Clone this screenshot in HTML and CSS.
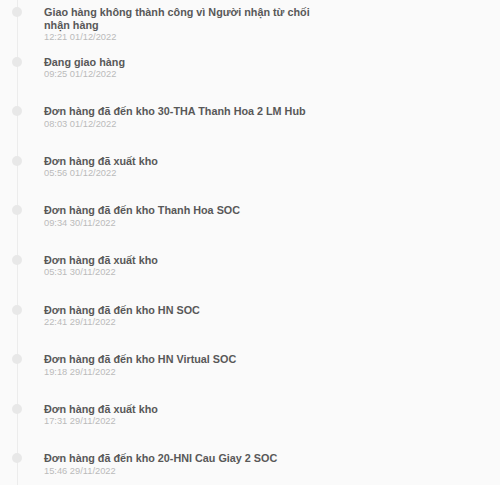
FILE: index.html
```html
<!DOCTYPE html>
<html lang="vi">
<head>
  <meta charset="UTF-8">
  <meta name="viewport" content="width=device-width, initial-scale=1.0">
  <title>Hành trình đơn hàng</title>
  <link rel="stylesheet" href="styles.css">
</head>
<body>
  <ul class="timeline">
    <li class="timeline-item">
      <span class="timeline-dot"></span>
      <div class="timeline-content">
        <div class="timeline-title">Giao hàng không thành công vì Người nhận từ chối nhận hàng</div>
        <div class="timeline-time">12:21 01/12/2022</div>
      </div>
    </li>
    <li class="timeline-item">
      <span class="timeline-dot"></span>
      <div class="timeline-content">
        <div class="timeline-title">Đang giao hàng</div>
        <div class="timeline-time">09:25 01/12/2022</div>
      </div>
    </li>
    <li class="timeline-item">
      <span class="timeline-dot"></span>
      <div class="timeline-content">
        <div class="timeline-title">Đơn hàng đã đến kho 30-THA Thanh Hoa 2 LM Hub</div>
        <div class="timeline-time">08:03 01/12/2022</div>
      </div>
    </li>
    <li class="timeline-item">
      <span class="timeline-dot"></span>
      <div class="timeline-content">
        <div class="timeline-title">Đơn hàng đã xuất kho</div>
        <div class="timeline-time">05:56 01/12/2022</div>
      </div>
    </li>
    <li class="timeline-item">
      <span class="timeline-dot"></span>
      <div class="timeline-content">
        <div class="timeline-title">Đơn hàng đã đến kho Thanh Hoa SOC</div>
        <div class="timeline-time">09:34 30/11/2022</div>
      </div>
    </li>
    <li class="timeline-item">
      <span class="timeline-dot"></span>
      <div class="timeline-content">
        <div class="timeline-title">Đơn hàng đã xuất kho</div>
        <div class="timeline-time">05:31 30/11/2022</div>
      </div>
    </li>
    <li class="timeline-item">
      <span class="timeline-dot"></span>
      <div class="timeline-content">
        <div class="timeline-title">Đơn hàng đã đến kho HN SOC</div>
        <div class="timeline-time">22:41 29/11/2022</div>
      </div>
    </li>
    <li class="timeline-item">
      <span class="timeline-dot"></span>
      <div class="timeline-content">
        <div class="timeline-title">Đơn hàng đã đến kho HN Virtual SOC</div>
        <div class="timeline-time">19:18 29/11/2022</div>
      </div>
    </li>
    <li class="timeline-item">
      <span class="timeline-dot"></span>
      <div class="timeline-content">
        <div class="timeline-title">Đơn hàng đã xuất kho</div>
        <div class="timeline-time">17:31 29/11/2022</div>
      </div>
    </li>
    <li class="timeline-item">
      <span class="timeline-dot"></span>
      <div class="timeline-content">
        <div class="timeline-title">Đơn hàng đã đến kho 20-HNI Cau Giay 2 SOC</div>
        <div class="timeline-time">15:46 29/11/2022</div>
      </div>
    </li>
  </ul>
</body>
</html>
```

FILE: styles.css
```css
html, body {
  margin: 0;
  background-color: #fafafa;
}
body {
  font-family: "Liberation Sans", Arial, sans-serif;
  min-height: 485px;
  overflow: hidden;
  background-image: linear-gradient(#ececec, #ececec);
  background-repeat: no-repeat;
  background-position: 17px 0;
  background-size: 1px 100%;
}
.timeline {
  list-style: none;
  margin: 0;
  padding: 6px 0 0 12px;
  width: 320px;
}
.timeline-item {
  display: flex;
  gap: 22px;
  height: 49.6px;
}
.timeline-dot {
  flex: none;
  width: 10px;
  height: 10px;
  margin-top: 1px;
  border-radius: 50%;
  background-color: #e8e8e8;
}
.timeline-title {
  font-size: 10.8px;
  line-height: 12.5px;
  font-weight: bold;
  color: #585858;
}
.timeline-time {
  font-size: 9.3px;
  line-height: 13.9px;
  color: #bababa;
}
```
